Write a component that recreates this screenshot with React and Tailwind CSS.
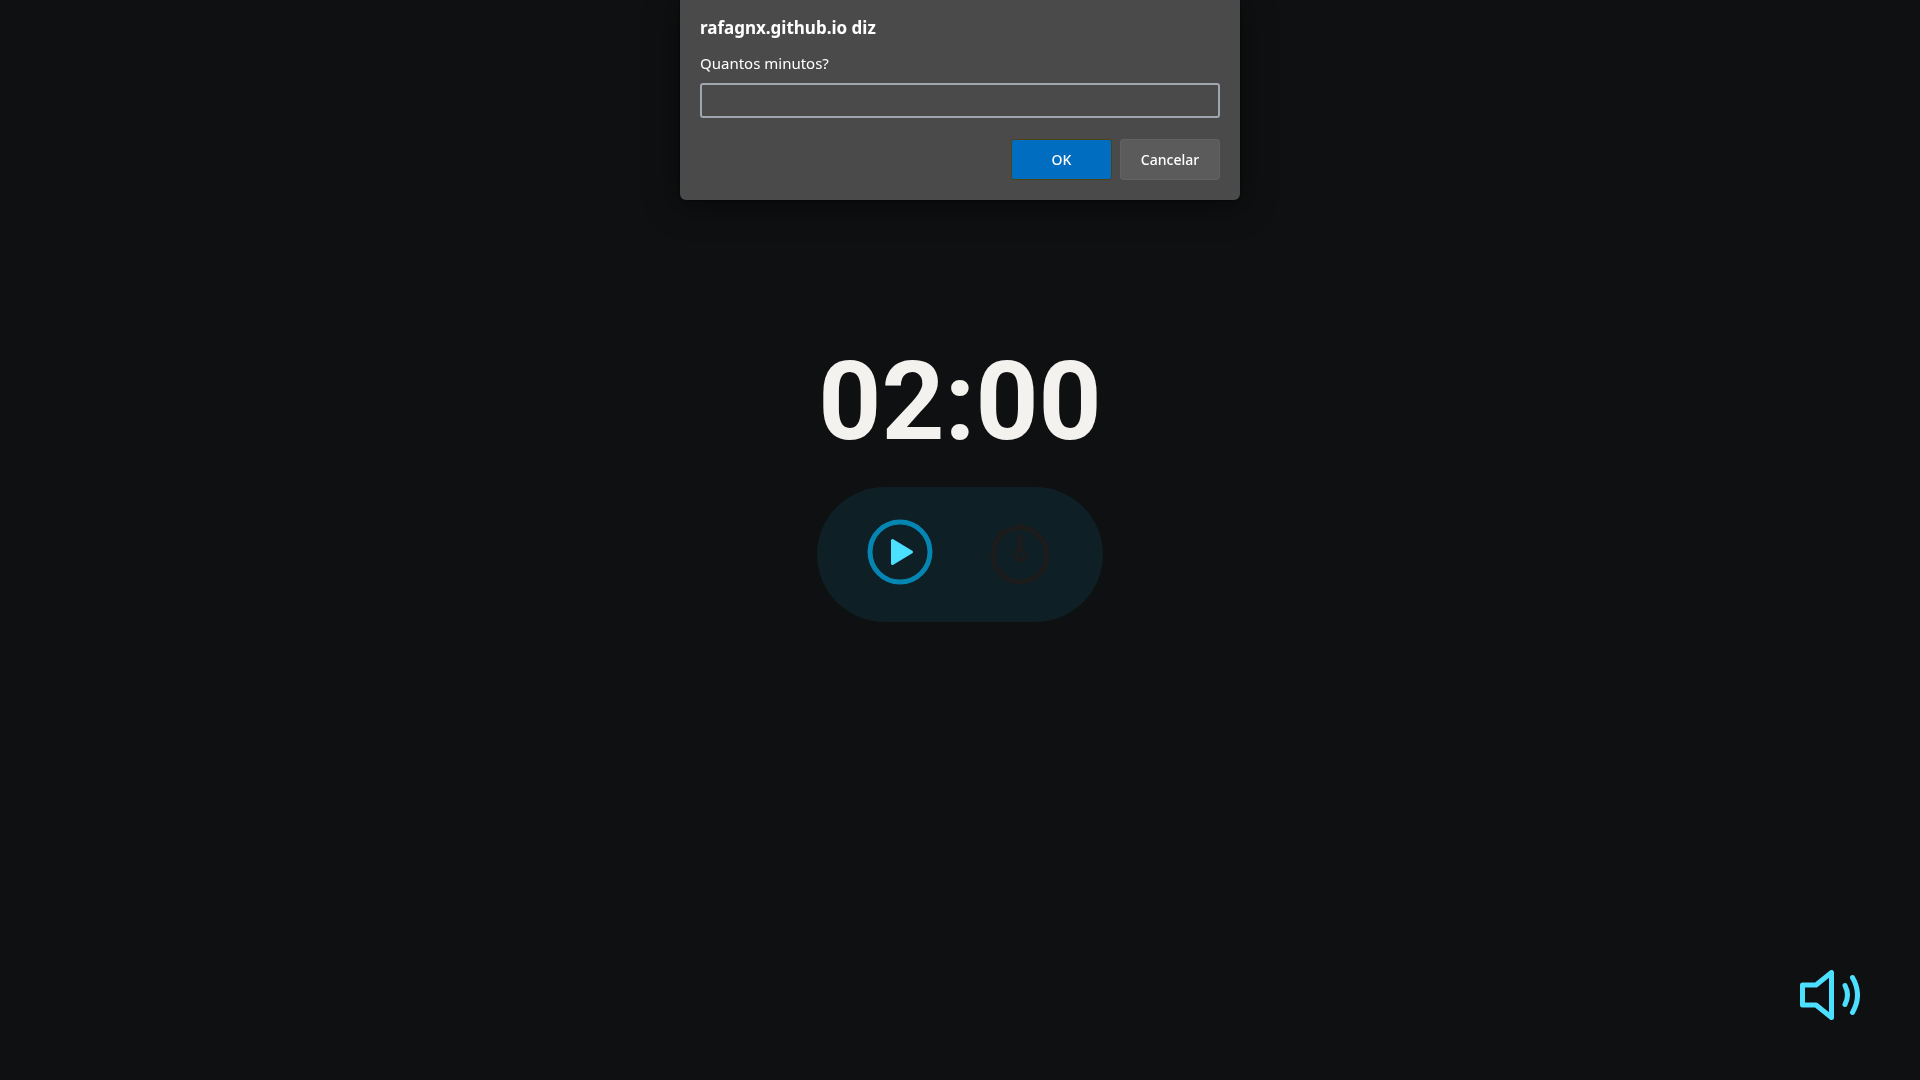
import { useState } from "react";

function PlayIcon() {
  return (
    <svg viewBox="0 0 66 66" className="size-[66px]" fill="none" aria-hidden="true">
      <circle cx="33" cy="33" r="30" stroke="#0586b2" strokeWidth="5" />
      <path d="M25.500 21.500v23L44.500 33z" fill="#4cdfff" stroke="#4cdfff" strokeWidth="3" strokeLinejoin="round" />
    </svg>
  );
}

function StopwatchIcon() {
  return (
    <svg viewBox="0 0 66 66" className="size-[66px]" fill="none" stroke="#1c1c1d" strokeWidth="5" strokeLinecap="round" aria-hidden="true">
      <circle cx="33" cy="36" r="27" />
      <circle cx="33" cy="36" r="5" strokeWidth="4" />
      <path d="M33 18v11" />
      <path d="M33 6v3" />
      <path d="M13 13.500l2 2" />
    </svg>
  );
}

function SpeakerIcon() {
  return (
    <svg viewBox="0 0 60 50" className="h-[50px] w-[60px]" fill="none" stroke="#4cdfff" strokeWidth="5" strokeLinecap="round" strokeLinejoin="round" aria-hidden="true">
      <path d="M2.500 15h13.500L31.500 2.500v45L16 35H2.500z" />
      <path d="M45 15.500q5 9.500 0 19" />
      <path d="M52.500 7.500q10 17.500 0 35" />
    </svg>
  );
}

function MinutesDialog() {
  const [minutes, setMinutes] = useState("");
  return (
    <form
      role="dialog"
      aria-labelledby="dialog-title"
      onSubmit={(event) => event.preventDefault()}
      className="fixed top-0 left-1/2 w-full max-w-[560px] -translate-x-1/2 rounded-b-md bg-[#4a4a4a] px-5 pt-4 pb-5 font-['Noto_Sans',sans-serif] text-white shadow-[0_4px_32px_#00000080,0_0_2px_#000000]"
    >
      <h2 id="dialog-title" className="text-[17px] leading-6 font-bold">
        rafagnx.github.io diz
      </h2>
      <label htmlFor="minutes" className="mt-[11px] block text-[15px] leading-6">
        Quantos minutos?
      </label>
      <input
        id="minutes"
        type="text"
        value={minutes}
        onChange={(event) => setMinutes(event.target.value)}
        className="mt-2 block h-[35px] w-full rounded-[3px] border-2 border-[#a0a6ad] bg-transparent px-2 text-[15px] outline-none"
      />
      <div className="mt-[21px] flex justify-end gap-2 text-sm font-medium">
        <button type="submit" className="h-[41px] w-[101px] rounded-[3px] border border-[#4d4412] bg-[#006dc1]">
          OK
        </button>
        <button type="button" className="h-[41px] w-[100px] rounded-[3px] border border-[#626262] bg-[#5b5b5b]">
          Cancelar
        </button>
      </div>
    </form>
  );
}

export default function App() {
  return (
    <div className="min-h-screen bg-[#0e1011]">
      <main className="flex flex-col items-center pt-[32vh]">
        <div role="timer" className="font-['Roboto',sans-serif] text-[110px] leading-[112px] font-bold text-[#f3f2ee]">
          02:00
        </div>
        <div className="mt-[29px] flex items-start gap-[54px] rounded-full bg-[#0e1f25] px-[50px] pt-8 pb-[37px]">
          <button type="button" aria-label="Iniciar">
            <PlayIcon />
          </button>
          <button type="button" aria-label="Definir minutos">
            <StopwatchIcon />
          </button>
        </div>
      </main>
      <button type="button" aria-label="Som" className="fixed right-[60px] bottom-[60px]">
        <SpeakerIcon />
      </button>
      <MinutesDialog />
    </div>
  );
}
